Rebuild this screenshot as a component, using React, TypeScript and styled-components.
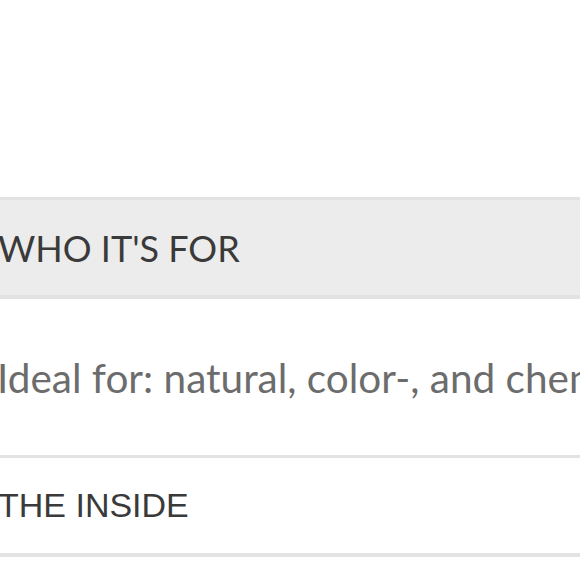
import styled, { createGlobalStyle } from 'styled-components';

const GlobalStyle = createGlobalStyle`
    html, body {
        margin: 0;
        padding: 0;
        background: #ffffff;
        overflow: hidden;
    }
`;

const Page = styled.div`
    width: 580px;
    height: 580px;
    overflow: hidden;
    padding-top: 197px;
    box-sizing: border-box;
`;

const Sections = styled.div`
    margin-left: -6px;
    width: 760px;
`;

const Header = styled.div<{ $open?: boolean }>`
    display: flex;
    align-items: center;
    height: 95px;
    padding-left: 4px;
    border-top: 3px solid #e3e3e3;
    border-bottom: 4px solid #e3e3e3;
    background-color: ${({ $open }) => ($open ? '#ececec' : '#ffffff')};
    color: #3a3a3a;
    font-family: ${({ $open }) => ($open ? 'Lato, "Open Sans", sans-serif' : '"Liberation Sans", Arial, sans-serif')};
    font-size: ${({ $open }) => ($open ? '36px' : '34px')};
    white-space: nowrap;
`;

const Body = styled.div`
    display: flex;
    align-items: center;
    height: 156px;
    padding-left: 3px;
    color: #6c6c6c;
    font-family: Lato, "Open Sans", sans-serif;
    font-size: 40.5px;
    white-space: nowrap;
`;

function App() {
    return (
        <>
            <GlobalStyle />
            <Page>
                <Sections>
                    <Header $open>WHO IT'S FOR</Header>
                    <Body>Ideal for: natural, color-, and chemically treated hair</Body>
                    <Header>THE INSIDE</Header>
                </Sections>
            </Page>
        </>
    )
}

export default App
